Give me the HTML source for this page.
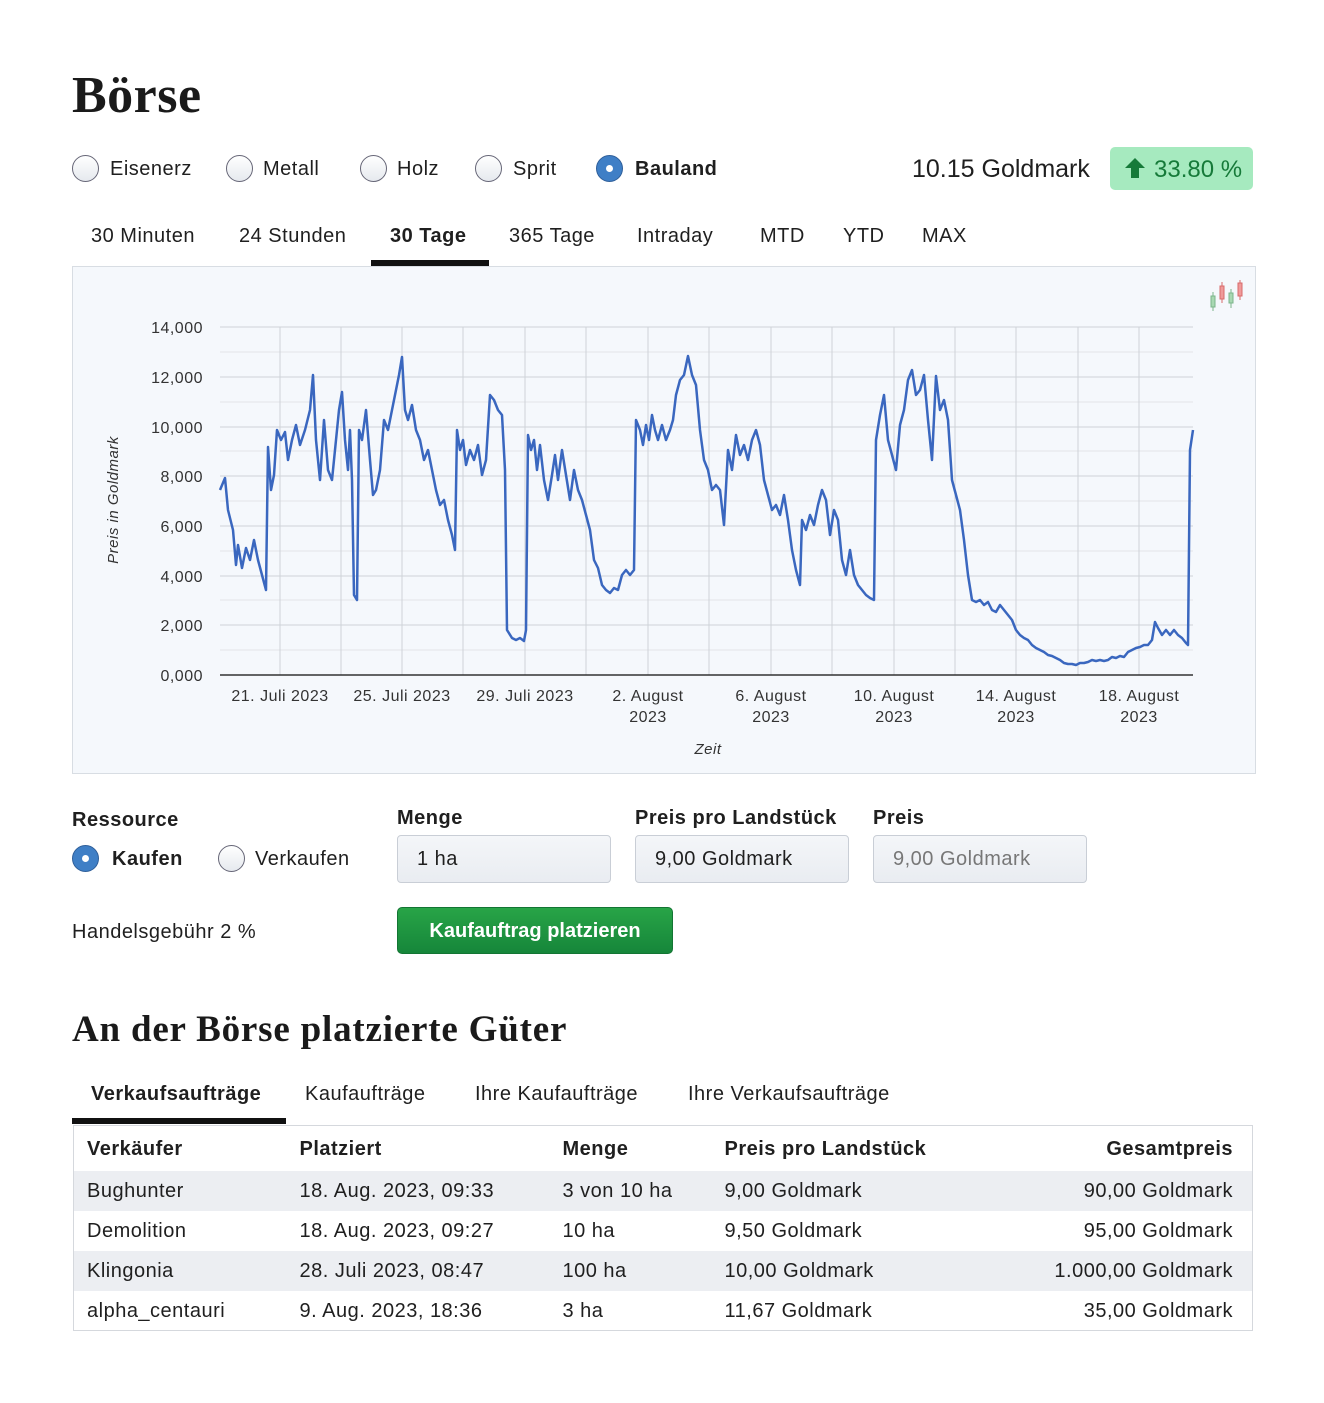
<!DOCTYPE html>
<html><head><meta charset="utf-8"><style>
*{box-sizing:border-box;margin:0;padding:0}
body{width:1324px;height:1403px;background:#fff;font-family:"Liberation Sans",sans-serif;color:#1f1f1f;position:relative;overflow:hidden;font-size:20px;letter-spacing:0.5px}
.a{position:absolute;white-space:nowrap}
.t{margin-top:2px}
h1,h2{font-family:"Liberation Serif",serif;font-weight:bold;position:absolute;color:#1a1a1a}
.r{position:absolute;width:27px;height:27px;border-radius:50%;border:1.5px solid #667;background:linear-gradient(#fff,#e6e9ee)}
.r.on{background:#3f7fc6;border:1.5px solid #2f5f9a}
.r.on::after{content:"";position:absolute;left:8.5px;top:8.5px;width:7px;height:7px;border-radius:50%;background:#fff}
.inp{position:absolute;height:48px;width:214px;border:1px solid #c9ced6;border-radius:4px;background:linear-gradient(#f4f6f9,#e9ecf1);padding:0 19px;line-height:46px;font-size:20px}
table{position:absolute;left:73px;top:1125px;width:1180px;border-collapse:collapse;border:1px solid #d5d8dd;font-size:20px}
td,th{height:40px;padding:2px 13px 0;text-align:left}
th{height:45px;font-weight:bold}
tr:nth-child(2),tr:nth-child(4){background:#eceef2}
td:last-child,th:last-child{text-align:right;padding-right:19px}
</style></head><body>
<h1 style="left:72px;top:66px;font-size:52px;letter-spacing:0.5px">Börse</h1>

<div class="r" style="left:72px;top:155px"></div><div class="a t" style="left:110px;top:156px">Eisenerz</div>
<div class="r" style="left:226px;top:155px"></div><div class="a t" style="left:263px;top:156px">Metall</div>
<div class="r" style="left:360px;top:155px"></div><div class="a t" style="left:397px;top:156px">Holz</div>
<div class="r" style="left:475px;top:155px"></div><div class="a t" style="left:513px;top:156px">Sprit</div>
<div class="r on" style="left:596px;top:155px"></div><div class="a t" style="left:635px;top:156px;font-weight:bold">Bauland</div>

<div class="a" style="left:912px;top:155px;font-size:25px;letter-spacing:0">10.15 Goldmark</div>
<div class="a" style="left:1110px;top:147px;width:143px;height:43px;background:#a6eabf;border-radius:5px;color:#167a39;font-size:24px;line-height:45px;padding-left:44px;letter-spacing:0">33.80 %</div>
<svg class="a" style="left:1124px;top:157px" width="22" height="22" viewBox="0 0 22 22"><path d="M11 1 L21 11 H15 V21 H7 V11 H1 Z" fill="#167a39"/></svg>

<div class="a t" style="left:91px;top:223px">30 Minuten</div>
<div class="a t" style="left:239px;top:223px">24 Stunden</div>
<div class="a t" style="left:390px;top:223px;font-weight:bold">30 Tage</div>
<div class="a" style="left:371px;top:260px;width:118px;height:6px;background:#111"></div>
<div class="a t" style="left:509px;top:223px">365 Tage</div>
<div class="a t" style="left:637px;top:223px">Intraday</div>
<div class="a t" style="left:760px;top:223px">MTD</div>
<div class="a t" style="left:843px;top:223px">YTD</div>
<div class="a t" style="left:922px;top:223px">MAX</div>

<div class="a" style="left:72px;top:266px;width:1184px;height:508px;background:#f5f8fc;border:1px solid #d8dde3"></div>
<svg class="a" style="left:0;top:0" width="1324" height="780">
<g stroke="#e2e4e8" stroke-width="1">
<line x1="220" x2="1193" y1="352" y2="352"/><line x1="220" x2="1193" y1="402" y2="402"/><line x1="220" x2="1193" y1="451" y2="451"/><line x1="220" x2="1193" y1="501" y2="501"/><line x1="220" x2="1193" y1="551" y2="551"/><line x1="220" x2="1193" y1="600" y2="600"/><line x1="220" x2="1193" y1="650" y2="650"/>
</g>
<g stroke="#cfd2d8" stroke-width="1">
<line x1="220" x2="1193" y1="327" y2="327"/><line x1="220" x2="1193" y1="377" y2="377"/><line x1="220" x2="1193" y1="427" y2="427"/><line x1="220" x2="1193" y1="476" y2="476"/><line x1="220" x2="1193" y1="526" y2="526"/><line x1="220" x2="1193" y1="576" y2="576"/><line x1="220" x2="1193" y1="625" y2="625"/>
<line x1="280" x2="280" y1="327" y2="675"/><line x1="341" x2="341" y1="327" y2="675"/><line x1="402" x2="402" y1="327" y2="675"/><line x1="463" x2="463" y1="327" y2="675"/><line x1="525" x2="525" y1="327" y2="675"/><line x1="586" x2="586" y1="327" y2="675"/><line x1="648" x2="648" y1="327" y2="675"/><line x1="709" x2="709" y1="327" y2="675"/><line x1="771" x2="771" y1="327" y2="675"/><line x1="832" x2="832" y1="327" y2="675"/><line x1="894" x2="894" y1="327" y2="675"/><line x1="955" x2="955" y1="327" y2="675"/><line x1="1016" x2="1016" y1="327" y2="675"/><line x1="1078" x2="1078" y1="327" y2="675"/><line x1="1139" x2="1139" y1="327" y2="675"/>
</g>
<line x1="220" x2="1193" y1="675" y2="675" stroke="#333" stroke-width="1.5"/>
<polyline fill="none" stroke="#3a67bf" stroke-width="2.5" stroke-linejoin="round" points="220,490 225,478 228,510 233,530 236,565 238,545 242,568 246,548 250,560 254,540 258,560 262,575 266,590 268,447 271,490 274,475 277,430 281,440 285,432 288,460 292,440 296,425 300,445 305,430 310,410 313,375 316,440 320,480 324,420 328,470 332,480 336,440 339,410 342,392 345,440 348,470 350,430 352,480 354,595 357,600 359,430 362,440 366,410 370,460 373,495 376,490 380,470 384,420 388,430 392,410 396,390 399,375 402,357 405,410 408,420 412,405 416,430 420,440 424,460 428,450 432,470 436,490 440,505 444,500 448,520 452,535 455,550 457,430 460,450 463,440 466,465 470,450 474,460 478,445 482,475 486,460 490,395 494,400 498,410 502,415 505,470 507,630 512,638 516,640 520,638 524,641 526,630 528,435 531,450 534,440 537,470 540,445 544,480 548,500 552,475 555,455 558,480 562,450 566,475 570,500 574,470 578,490 582,500 586,515 590,530 594,560 598,568 602,585 606,590 610,593 614,588 618,590 622,575 626,570 630,575 634,570 636,420 640,430 643,445 646,425 649,440 652,415 655,430 658,440 662,425 666,440 670,430 673,420 676,395 680,380 684,375 688,356 692,375 696,385 700,430 704,460 708,470 712,490 716,485 720,490 724,525 728,450 732,470 736,435 740,455 744,445 748,460 752,440 756,430 760,445 764,480 768,495 772,510 776,505 780,515 784,495 788,520 792,550 796,570 800,585 802,520 806,530 810,515 814,525 818,505 822,490 826,500 830,535 834,510 838,520 842,560 846,575 850,550 854,575 858,585 862,590 866,595 870,598 874,600 876,440 880,415 884,395 888,440 892,455 896,470 900,425 904,410 908,380 912,370 916,395 920,390 924,375 928,420 932,460 936,376 940,410 944,400 948,420 952,480 956,495 960,510 964,540 968,575 972,600 976,602 980,600 984,605 988,602 992,610 996,612 1000,605 1004,610 1008,615 1012,620 1016,630 1020,635 1024,638 1028,640 1032,645 1036,648 1040,650 1044,652 1048,655 1052,656 1056,658 1060,660 1064,663 1068,664 1072,664 1076,665 1080,663 1084,663 1088,662 1092,660 1096,661 1100,660 1104,661 1108,660 1112,657 1116,658 1120,656 1124,657 1128,652 1132,650 1136,648 1140,647 1144,645 1148,645 1152,640 1155,622 1158,628 1162,635 1166,630 1170,635 1174,630 1178,635 1182,638 1186,643 1188,645 1190,450 1193,430"/>
<g font-family="Liberation Sans,sans-serif" font-size="16" fill="#333" text-anchor="end">
<text x="203" y="333">14,000</text><text x="203" y="383">12,000</text><text x="203" y="433">10,000</text><text x="203" y="482">8,000</text><text x="203" y="532">6,000</text><text x="203" y="582">4,000</text><text x="203" y="631">2,000</text><text x="203" y="681">0,000</text>
</g>
<g font-family="Liberation Sans,sans-serif" font-size="16" fill="#333" text-anchor="middle">
<text x="280" y="701">21. Juli 2023</text><text x="402" y="701">25. Juli 2023</text><text x="525" y="701">29. Juli 2023</text>
<text x="648" y="701">2. August</text><text x="648" y="722">2023</text>
<text x="771" y="701">6. August</text><text x="771" y="722">2023</text>
<text x="894" y="701">10. August</text><text x="894" y="722">2023</text>
<text x="1016" y="701">14. August</text><text x="1016" y="722">2023</text>
<text x="1139" y="701">18. August</text><text x="1139" y="722">2023</text>
<text x="708" y="754" font-style="italic" font-size="15">Zeit</text>
<text transform="translate(118,500) rotate(-90)" font-style="italic" font-size="15">Preis in Goldmark</text>
</g>
<g stroke-width="1">
<line x1="1213" x2="1213" y1="292" y2="311" stroke="#7ab58a"/><rect x="1211" y="296" width="4" height="11" fill="#a8d8b2" stroke="#7ab58a"/>
<line x1="1222" x2="1222" y1="282" y2="303" stroke="#d86a6a"/><rect x="1220" y="286" width="4" height="13" fill="#ef9a9a" stroke="#d86a6a"/>
<line x1="1231" x2="1231" y1="289" y2="308" stroke="#7ab58a"/><rect x="1229" y="293" width="4" height="10" fill="#a8d8b2" stroke="#7ab58a"/>
<line x1="1240" x2="1240" y1="280" y2="300" stroke="#d86a6a"/><rect x="1238" y="283" width="4" height="13" fill="#ef9a9a" stroke="#d86a6a"/>
</g>
</svg>

<div class="a t" style="left:72px;top:807px;font-weight:bold">Ressource</div>
<div class="r on" style="left:72px;top:845px"></div><div class="a t" style="left:112px;top:846px;font-weight:bold">Kaufen</div>
<div class="r" style="left:218px;top:845px"></div><div class="a t" style="left:255px;top:846px">Verkaufen</div>
<div class="a t" style="left:397px;top:805px;font-weight:bold">Menge</div>
<div class="inp" style="left:397px;top:835px">1 ha</div>
<div class="a t" style="left:635px;top:805px;font-weight:bold">Preis pro Landstück</div>
<div class="inp" style="left:635px;top:835px">9,00 Goldmark</div>
<div class="a t" style="left:873px;top:805px;font-weight:bold">Preis</div>
<div class="inp" style="left:873px;top:835px;color:#777">9,00 Goldmark</div>
<div class="a t" style="left:72px;top:919px">Handelsgebühr 2 %</div>
<div class="a" style="left:397px;top:907px;width:276px;height:47px;border-radius:5px;background:linear-gradient(#28a447,#16863a);border:1px solid #137533;color:#fff;font-weight:bold;line-height:47px;text-align:center;letter-spacing:0">Kaufauftrag platzieren</div>

<h2 style="left:72px;top:1008px;font-size:37px;letter-spacing:0.8px">An der Börse platzierte Güter</h2>
<div class="a t" style="left:91px;top:1081px;font-weight:bold">Verkaufsaufträge</div>
<div class="a t" style="left:305px;top:1081px">Kaufaufträge</div>
<div class="a t" style="left:475px;top:1081px">Ihre Kaufaufträge</div>
<div class="a t" style="left:688px;top:1081px">Ihre Verkaufsaufträge</div>
<div class="a" style="left:72px;top:1118px;width:214px;height:6px;background:#111"></div>
<table>
<tr><th style="width:213px">Verkäufer</th><th style="width:263px">Platziert</th><th style="width:162px">Menge</th><th>Preis pro Landstück</th><th>Gesamtpreis</th></tr>
<tr><td>Bughunter</td><td>18. Aug. 2023, 09:33</td><td>3 von 10 ha</td><td>9,00 Goldmark</td><td>90,00 Goldmark</td></tr>
<tr><td>Demolition</td><td>18. Aug. 2023, 09:27</td><td>10 ha</td><td>9,50 Goldmark</td><td>95,00 Goldmark</td></tr>
<tr><td>Klingonia</td><td>28. Juli 2023, 08:47</td><td>100 ha</td><td>10,00 Goldmark</td><td>1.000,00 Goldmark</td></tr>
<tr><td>alpha_centauri</td><td>9. Aug. 2023, 18:36</td><td>3 ha</td><td>11,67 Goldmark</td><td>35,00 Goldmark</td></tr>
</table>
</body></html>
